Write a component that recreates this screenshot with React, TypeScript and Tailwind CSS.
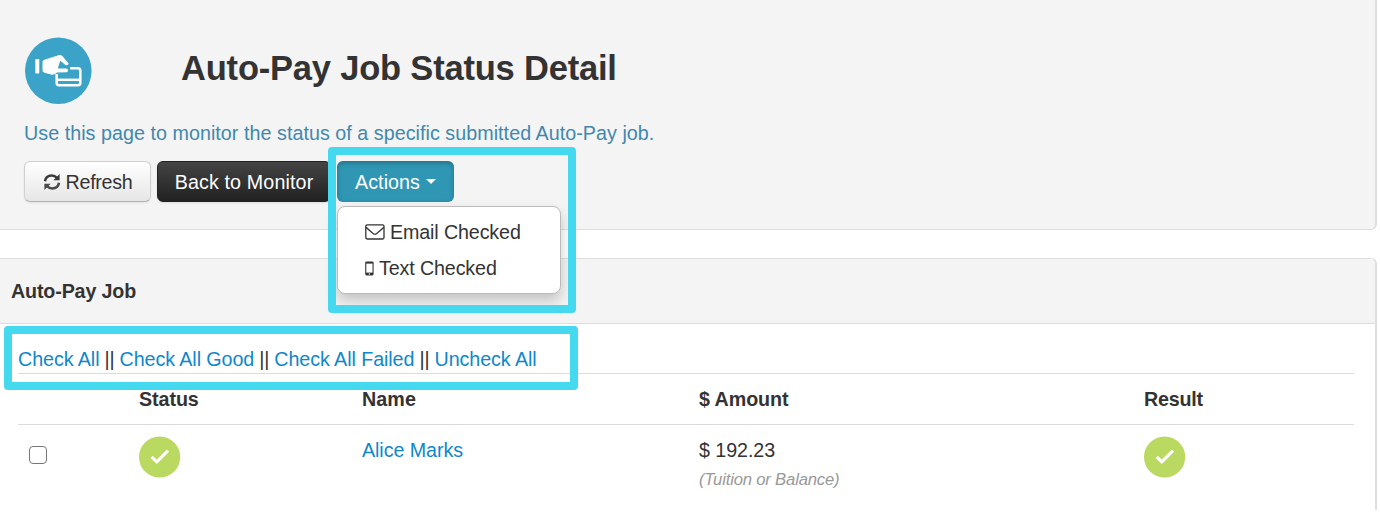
import React, { useState } from 'react';

interface Job {
  id: number;
  name: string;
  amount: string;
  note: string;
}

const jobs: Job[] = [
  { id: 1, name: 'Alice Marks', amount: '$ 192.23', note: '(Tuition or Balance)' },
];

const PayIcon = () => (
  <svg width="68" height="68" viewBox="0 0 68 68" fill="none">
    <circle cx="34.3" cy="33.7" r="33.3" fill="#3ba3c8" />
    <rect x="11.3" y="22" width="4" height="14.5" rx="0.8" fill="#fff" />
    <path d="M18.5 24.5 Q19 23 21 22.5 L34.5 18.3 Q37 17.6 38.8 19.6 L44.6 26.4 Q44.4 28.6 41.5 28 L36.2 23.8 L33.8 31.5 L42.5 31.5 Q45.5 33.2 43 35.2 L33 35.6 Q31 38.2 27 37.6 L20.5 35.8 Q18.5 35 18.5 33.5 Z" fill="#fff" />
    <path d="M46 31.3 H54 Q56.3 31.3 56.3 33.6 V45.7 Q56.3 48.2 54 48.2 H35 Q32.7 48.2 32.7 45.7 V37" stroke="#fff" strokeWidth="2.6" />
    <path d="M33 42.8 H56" stroke="#fff" strokeWidth="2.4" />
  </svg>
);

const RefreshIcon = () => (
  <svg width="18" height="18" viewBox="0 0 18 18" fill="none">
    <path d="M2 8.2 C2.6 4.4 5.4 2.6 8.8 2.6 C11 2.6 12.6 3.4 14 4.8" stroke="#3a3a3a" strokeWidth="2.5" />
    <path d="M16.6 1 V7.2 H10.4 Z" fill="#3a3a3a" />
    <path d="M16 9.8 C15.4 13.6 12.6 15.4 9.2 15.4 C7 15.4 5.4 14.6 4 13.2" stroke="#4a4a4a" strokeWidth="2.5" />
    <path d="M1.4 17 V10.8 H7.6 Z" fill="#4a4a4a" />
  </svg>
);

const EnvelopeIcon = () => (
  <svg width="20" height="16" viewBox="0 0 20 16" fill="none" stroke="#333" strokeWidth="1.3">
    <rect x="0.8" y="0.8" width="18.2" height="14.2" rx="1.4" />
    <path d="M1 3.2 C3.5 5.6 6 7.4 8 9.4 Q9.9 11 11.8 9.4 C14 7.4 16.5 5.6 18.8 3.2" />
  </svg>
);

const MobileIcon = () => (
  <svg width="9" height="15" viewBox="0 0 9 15">
    <rect x="0.2" y="0.4" width="8.4" height="14" rx="1.4" fill="#333" />
    <rect x="1.3" y="2.6" width="6.2" height="9" fill="#fff" />
    <circle cx="4.4" cy="13" r="0.7" fill="#fff" />
  </svg>
);

const GoodBadge = () => (
  <svg width="42" height="42" viewBox="0 0 42 42" fill="none">
    <circle cx="20.6" cy="21" r="20.6" fill="#b9d961" />
    <path d="M12.6 20.8 L17.8 25.8 L29 14.6" stroke="#fff" strokeWidth="3.2" />
  </svg>
);

const links = ['Check All', 'Check All Good', 'Check All Failed', 'Uncheck All'];

const App: React.FC = () => {
  const [checked, setChecked] = useState<number[]>([]);
  const [open, setOpen] = useState(true);

  const runLink = (label: string) => {
    setChecked(label === 'Check All' || label === 'Check All Good' ? jobs.map(j => j.id) : []);
  };

  const toggle = (id: number) => {
    setChecked(prev => (prev.includes(id) ? prev.filter(x => x !== id) : [...prev, id]));
  };

  return (
    <div className="relative h-[520px] w-[1380px] overflow-hidden bg-white font-['Liberation_Sans',Arial,sans-serif] text-[19.7px] leading-[28px] tracking-[-0.07px] text-[#333]">
      {/* Page header */}
      <header className="h-[230px] w-[1377px] rounded-br-md border-r-2 border-b border-[#dedede] bg-[#f4f4f4] pl-6">
        <div className="flex h-[120px] items-center pt-[21px]">
          <PayIcon />
          <h1 className="-mt-[5px] ml-[89px] text-[34.5px] leading-[40px] font-bold tracking-[-0.2px] whitespace-nowrap">Auto-Pay Job Status Detail</h1>
        </div>
        <p className="h-[41px] leading-[27px] tracking-[0.045px] whitespace-nowrap text-[#4188ae]">Use this page to monitor the status of a specific submitted Auto-Pay job.</p>
        <div className="flex gap-1.5">
          <button className="flex h-[41px] w-[127px] items-center justify-center gap-[5px] rounded-md border border-[#d0d0d0] border-b-[#b3b3b3] bg-linear-to-b from-white to-[#e6e6e6] tracking-[-0.3px] shadow-[0_1px_2px_rgba(0,0,0,0.08)]">
            <RefreshIcon />
            Refresh
          </button>
          <button className="h-[41px] w-[174px] rounded-md border border-[#222] bg-linear-to-b from-[#444] to-[#222] tracking-[0.13px] whitespace-nowrap text-white shadow-[0_1px_2px_rgba(0,0,0,0.1)]">Back to Monitor</button>
          <div className="relative">
            <button
              onClick={() => setOpen(!open)}
              className="flex h-[41px] w-[117px] items-center justify-center gap-1.5 rounded-md bg-[#2f96b4] tracking-[0.05px] text-white shadow-[inset_0_2px_5px_rgba(0,0,0,0.25)]"
            >
              Actions
              <span className="border-x-[5.5px] border-t-[5.5px] border-x-transparent border-t-white" />
            </button>
            {open && (
              <ul className="absolute top-[45px] left-0 h-[88px] w-[224px] rounded-lg border border-[#bbb] bg-white pt-[7px] pl-[27px] tracking-[-0.13px] shadow-[0_7px_14px_rgba(0,0,0,0.2)]">
                <li className="flex h-9 items-center gap-[5px] whitespace-nowrap"><EnvelopeIcon />Email Checked</li>
                <li className="flex h-9 items-center gap-[5px] whitespace-nowrap"><MobileIcon />Text Checked</li>
              </ul>
            )}
          </div>
        </div>
      </header>

      {/* Job panel */}
      <section className="mt-7 h-[252px] w-[1377px] rounded-tr-md border-t border-r-2 border-[#dedede]">
        <div className="flex h-[65px] items-center rounded-tr-md border-b border-[#dcdcdc] bg-[#f4f4f4] pl-[11px]">
          <h2 className="font-bold tracking-[-0.15px]">Auto-Pay Job</h2>
        </div>
        <div className="mr-[21px] ml-[18px]">
          <div className="flex h-[49px] items-end gap-[5px] whitespace-nowrap">
            {links.map((label, i) => (
              <React.Fragment key={label}>
                {i > 0 && <span>||</span>}
                <a className="cursor-pointer text-[#0e87cd]" onClick={() => runLink(label)}>{label}</a>
              </React.Fragment>
            ))}
          </div>
          <div className="grid h-[52px] grid-cols-[121px_223px_337px_445px_1fr] items-center border-y border-[#dcdcdc] font-bold">
            <span />
            <span>Status</span>
            <span className="tracking-[0.1px]">Name</span>
            <span>$ Amount</span>
            <span className="tracking-[-0.2px]">Result</span>
          </div>
          {jobs.map(job => (
            <div key={job.id} className="grid grid-cols-[121px_223px_337px_445px_1fr] pt-[11px]">
              <input
                type="checkbox"
                checked={checked.includes(job.id)}
                onChange={() => toggle(job.id)}
                className="mt-[10px] ml-[11px] size-[18px] appearance-none rounded-[4px] border-[1.5px] border-[#767676] bg-white checked:bg-[#0e87cd]"
              />
              <GoodBadge />
              <a className="text-[#0e87cd]">{job.name}</a>
              <div>
                <p>{job.amount}</p>
                <p className="pt-0.5 text-[16.7px] tracking-[-0.2px] text-[#999] italic">{job.note}</p>
              </div>
              <GoodBadge />
            </div>
          ))}
        </div>
      </section>

      {/* Callout frames */}
      <div className="pointer-events-none absolute top-[147px] left-[328px] h-[166px] w-[248px] rounded-[4px] border-8 border-[#45d9ef]" />
      <div className="pointer-events-none absolute top-[326px] left-[4px] h-[64px] w-[574px] rounded-[4px] border-8 border-[#45d9ef]" />
    </div>
  );
};

export default App;
